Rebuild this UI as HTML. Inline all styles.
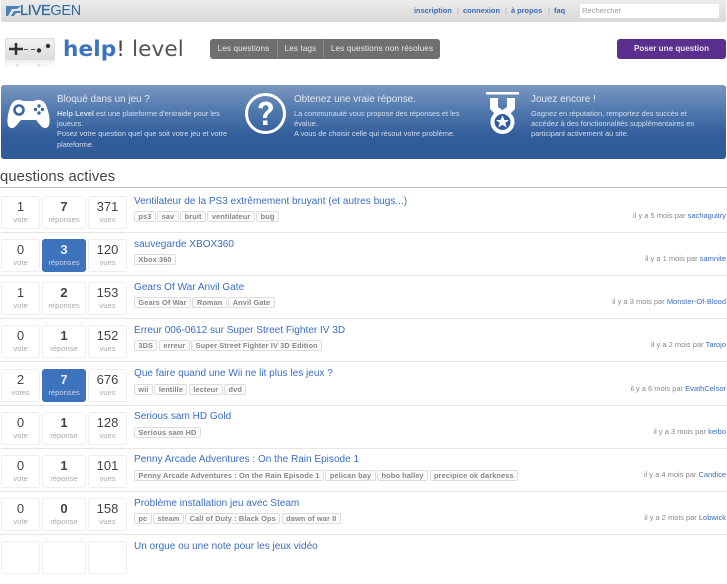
<!DOCTYPE html>
<html><head><meta charset="utf-8"><style>
*{box-sizing:border-box}
html,body{margin:0;padding:0;width:727px;height:545px;overflow:hidden;background:#fff;font-family:"Liberation Sans",sans-serif}
.a{position:absolute;white-space:nowrap}
#top{left:1px;top:0;width:725px;height:22px;background:linear-gradient(#ececec,#d8d8d8);border-radius:0 0 2px 2px}
.nav{top:6px;font-size:7.4px;font-weight:bold;color:#3a6cb5;line-height:9px}
.sep{top:6px;font-size:7.4px;color:#aaa;line-height:9px}
.btn{background:#6f6f6f;height:20px;top:39px;color:#e8e8e8;font-size:8.2px;line-height:20px;text-align:center;letter-spacing:.1px}
.ban{top:85px;height:74px;background:linear-gradient(#7b97c0,#4f78ad 35%,#315d9a 70%,#2f5b98)}
.bh{font-size:9.9px;color:#dfe6f0;line-height:12px}
.bt{font-size:7.4px;color:#d4deec;line-height:10.4px}
.row{position:absolute;left:0;width:727px;height:43px}
.box{position:absolute;top:0;height:33px;border:1px solid #eee;border-radius:3px;text-align:center;background:#fff}
.n{display:block;font-size:13px;line-height:14px;margin-top:3px;color:#444}
.l{display:block;font-size:7.6px;line-height:9px;margin-top:1px;color:#aaa}
.b1{left:1px;width:39px}.b2{left:42px;width:44px}.b3{left:88px;width:39px}
.b2 .n{font-weight:bold}
.hi{background:#3d72bd;border-color:#3d72bd}.hi .n{color:#e8eef8}.hi .l{color:#c5d5ec}
.ti{position:absolute;left:134px;top:-1.5px;font-size:10.05px;line-height:13px;color:#3b6dc0;white-space:nowrap}
.tg{position:absolute;left:134px;top:15px;white-space:nowrap;font-size:0}
.tg span{display:inline-block;height:11px;line-height:9.5px;font-size:7.4px;font-weight:bold;color:#888;border:1px solid #ddd;border-radius:2px;padding:0 3.4px;margin-right:1.5px;background:#fbfbfb;letter-spacing:.1px}
.by{position:absolute;right:1px;top:15px;font-size:7.5px;line-height:10px;color:#888;white-space:nowrap}
.by b{font-weight:normal;color:#3b6dc0}
.ln{position:absolute;left:0;top:36px;width:727px;height:1px;background:#e6e6e6}
</style></head><body>
<div class="a" id="top"></div>
<svg class="a" style="left:6px;top:4px" width="15" height="13" viewBox="0 0 15 13"><path d="M0 2H15L11 5H6L2 12H0ZM5 12L8 7H15L14 9H10L8 12ZM2 5H5" fill="#4b82b8"/></svg>
<div class="a" style="left:20px;top:2px;font-size:14.4px;line-height:18px;color:#2f6c9f;letter-spacing:-.2px"><span style="-webkit-text-stroke:.35px #2f6c9f">LIVE</span>GEN</div>
<div class="a nav" style="left:414px">inscription</div><div class="a sep" style="left:457px">|</div>
<div class="a nav" style="left:463px">connexion</div><div class="a sep" style="left:505px">|</div>
<div class="a nav" style="left:511px">à propos</div><div class="a sep" style="left:548px">|</div>
<div class="a nav" style="left:554px">faq</div>
<div class="a" style="left:580px;top:4px;width:139px;height:14px;background:#fff;border-radius:2px;font-size:7.6px;line-height:14px;padding-left:2px;color:#999">Rechercher</div>

<div class="a" style="left:5px;top:38px;width:50px;height:22px;background:linear-gradient(#f2f2f2,#dcdcdc);border:1px solid #d5dde5;border-radius:2px"></div>
<div class="a" style="left:5px;top:60px;width:50px;height:8px;background:linear-gradient(#eee,#fff)"></div>
<svg class="a" style="left:5px;top:38px" width="50" height="30" viewBox="0 0 50 30"><path d="M4 11H18M11 5V17" stroke="#333" stroke-width="2.600"/><path d="M19 11.500H23M26 11.500H30" stroke="#555" stroke-width="1"/><circle cx="34" cy="12.500" r="2.200" fill="#333"/><circle cx="43" cy="8" r="2.200" fill="#333"/><circle cx="34" cy="27" r="1.500" fill="#ddd"/><circle cx="12" cy="27" r="1.500" fill="#e2e2e2"/></svg>
<div class="a" style="left:63px;top:36px;font-family:'DejaVu Sans',sans-serif;font-size:21.6px;line-height:28px;color:#555;letter-spacing:.1px"><b style="color:#3a74c0;font-weight:bold">help</b><span style="color:#444">!</span> level</div>

<div class="a btn" style="left:210px;width:67px;border-radius:3px 0 0 3px">Les questions</div>
<div class="a btn" style="left:277px;width:46px;border-left:1px solid #8a8a8a">Les tags</div>
<div class="a btn" style="left:323px;width:117px;border-left:1px solid #8a8a8a;border-radius:0 3px 3px 0">Les questions non résolues</div>
<div class="a" style="left:617px;top:39px;width:109px;height:20px;background:#5a2f8e;border-radius:3px;color:#e8e3f0;font-size:8.1px;font-weight:bold;line-height:20px;text-align:center">Poser une question</div>

<div class="a ban" style="left:1px;width:725px;border-radius:3px"></div>
<svg class="a" style="left:6px;top:98px" width="45" height="32" viewBox="0 0 45 32"><path d="M11 2C14 1 16 3 18 3H27C29 3 31 1 34 2C39 3 41 8 43 17C44 23 44 29 40 30C36 31 33 25 30 22H15C12 25 9 31 5 30C1 29 1 23 2 17C4 8 6 3 11 2Z" fill="#fff"/><circle cx="13" cy="12" r="4.500" fill="none" stroke="#3c67a3" stroke-width="2.600"/><circle cx="33" cy="8" r="1.700" fill="#3c67a3"/><circle cx="33" cy="15" r="1.700" fill="#3c67a3"/><circle cx="29.500" cy="11.500" r="1.700" fill="#3c67a3"/><circle cx="36.500" cy="11.500" r="1.700" fill="#3c67a3"/></svg>
<div class="a bh" style="left:57px;top:93.5px">Bloqué dans un jeu ?</div>
<div class="a bt" style="left:57px;top:108.5px"><b>Help Level</b> est une plateforme d'entraide pour les<br>joueurs.<br>Posez votre question quel que soit votre jeu et votre<br>plateforme.</div>

<svg class="a" style="left:244px;top:92px" width="43" height="43" viewBox="0 0 43 43"><circle cx="21.500" cy="21.500" r="19" fill="none" stroke="#fff" stroke-width="3"/><path d="M14.500 16C14.500 11.500 18 9.500 22 9.500C26.500 9.500 29 12 29 15.500C29 20.500 23 20.500 23 26H19C19 19.500 24.500 19.500 24.500 15.800C24.500 14 23.500 13.200 21.700 13.200C19.700 13.200 18.800 14.500 18.700 16.500Z" fill="#fff"/><rect x="19" y="28.500" width="4.500" height="4.500" fill="#fff"/></svg>
<div class="a bh" style="left:294px;top:93.5px">Obtenez une vraie réponse.</div>
<div class="a bt" style="left:294px;top:108.5px">La communauté vous propose des réponses et les<br>évalue.<br>A vous de choisir celle qui résout votre problème.</div>

<svg class="a" style="left:486px;top:92px" width="33" height="42" viewBox="0 0 33 42"><rect width="33" height="2.500" fill="#fff"/><path d="M4 6H12V15L16.500 18L21 15V6H29V17L22 24H11L4 17Z" fill="#fff"/><circle cx="16.500" cy="30" r="10" fill="#315d9a" stroke="#fff" stroke-width="4"/><path d="M16.500 23.500L18.400 28H23L19.300 30.900L20.700 35.500L16.500 32.700L12.300 35.500L13.700 30.900L10 28H14.600Z" fill="#fff"/></svg>
<div class="a bh" style="left:531px;top:93.5px">Jouez encore !</div>
<div class="a bt" style="left:531px;top:108.5px">Gagnez en réputation, remportez des succès et<br>accédez à des fonctionnalités supplémentaires en<br>participant activement au site.</div>

<div class="a" style="left:0;top:167px;font-size:14.8px;line-height:20px;color:#444;letter-spacing:.1px">questions actives</div>
<div class="a" style="left:0;top:187px;width:727px;height:1px;background:#bbb"></div>

<div class="row" style="top:196px"><div class="box b1"><span class="n">1</span><span class="l">vote</span></div><div class="box b2"><span class="n">7</span><span class="l">réponses</span></div><div class="box b3"><span class="n">371</span><span class="l">vues</span></div><div class="ti">Ventilateur de la PS3 extrêmement bruyant (et autres bugs...)</div><div class="tg"><span>ps3</span><span>sav</span><span>bruit</span><span>ventilateur</span><span>bug</span></div><div class="by">il y a 5 mois par <b>sachaguitry</b></div><div class="ln"></div></div>
<div class="row" style="top:239.100px"><div class="box b1"><span class="n">0</span><span class="l">vote</span></div><div class="box b2 hi"><span class="n">3</span><span class="l">réponses</span></div><div class="box b3"><span class="n">120</span><span class="l">vues</span></div><div class="ti">sauvegarde XBOX360</div><div class="tg"><span>Xbox 360</span></div><div class="by">il y a 1 mois par <b>samnite</b></div><div class="ln"></div></div>
<div class="row" style="top:282.300px"><div class="box b1"><span class="n">1</span><span class="l">vote</span></div><div class="box b2"><span class="n">2</span><span class="l">réponses</span></div><div class="box b3"><span class="n">153</span><span class="l">vues</span></div><div class="ti">Gears Of War Anvil Gate</div><div class="tg"><span>Gears Of War</span><span>Roman</span><span>Anvil Gate</span></div><div class="by">il y a 3 mois par <b>Monster-Of-Blood</b></div><div class="ln"></div></div>
<div class="row" style="top:325.400px"><div class="box b1"><span class="n">0</span><span class="l">vote</span></div><div class="box b2"><span class="n">1</span><span class="l">réponse</span></div><div class="box b3"><span class="n">152</span><span class="l">vues</span></div><div class="ti">Erreur 006-0612 sur Super Street Fighter IV 3D</div><div class="tg"><span>3DS</span><span>erreur</span><span>Super Street Fighter IV 3D Edition</span></div><div class="by">il y a 2 mois par <b>Tarojo</b></div><div class="ln"></div></div>
<div class="row" style="top:368.600px"><div class="box b1"><span class="n">2</span><span class="l">votes</span></div><div class="box b2 hi"><span class="n">7</span><span class="l">réponses</span></div><div class="box b3"><span class="n">676</span><span class="l">vues</span></div><div class="ti">Que faire quand une Wii ne lit plus les jeux ?</div><div class="tg"><span>wii</span><span>lentille</span><span>lecteur</span><span>dvd</span></div><div class="by">il y a 6 mois par <b>EvathCelsor</b></div><div class="ln"></div></div>
<div class="row" style="top:411.700px"><div class="box b1"><span class="n">0</span><span class="l">vote</span></div><div class="box b2"><span class="n">1</span><span class="l">réponse</span></div><div class="box b3"><span class="n">128</span><span class="l">vues</span></div><div class="ti">Serious sam HD Gold</div><div class="tg"><span>Serious sam HD</span></div><div class="by">il y a 3 mois par <b>keibo</b></div><div class="ln"></div></div>
<div class="row" style="top:454.900px"><div class="box b1"><span class="n">0</span><span class="l">vote</span></div><div class="box b2"><span class="n">1</span><span class="l">réponse</span></div><div class="box b3"><span class="n">101</span><span class="l">vues</span></div><div class="ti">Penny Arcade Adventures : On the Rain Episode 1</div><div class="tg"><span>Penny Arcade Adventures : On the Rain Episode 1</span><span>pelican bay</span><span>hobo halley</span><span>precipice ok darkness</span></div><div class="by">il y a 4 mois par <b>Candice</b></div><div class="ln"></div></div>
<div class="row" style="top:498px"><div class="box b1"><span class="n">0</span><span class="l">vote</span></div><div class="box b2"><span class="n">0</span><span class="l">réponse</span></div><div class="box b3"><span class="n">158</span><span class="l">vues</span></div><div class="ti">Problème installation jeu avec Steam</div><div class="tg"><span>pc</span><span>steam</span><span>Call of Duty : Black Ops</span><span>dawn of war II</span></div><div class="by">il y a 2 mois par <b>Lobwick</b></div><div class="ln"></div></div>
<div class="row" style="top:541px"><div class="box b1"></div><div class="box b2"></div><div class="box b3"></div><div class="ti">Un orgue ou une note pour les jeux vidéo</div></div>
</body></html>
